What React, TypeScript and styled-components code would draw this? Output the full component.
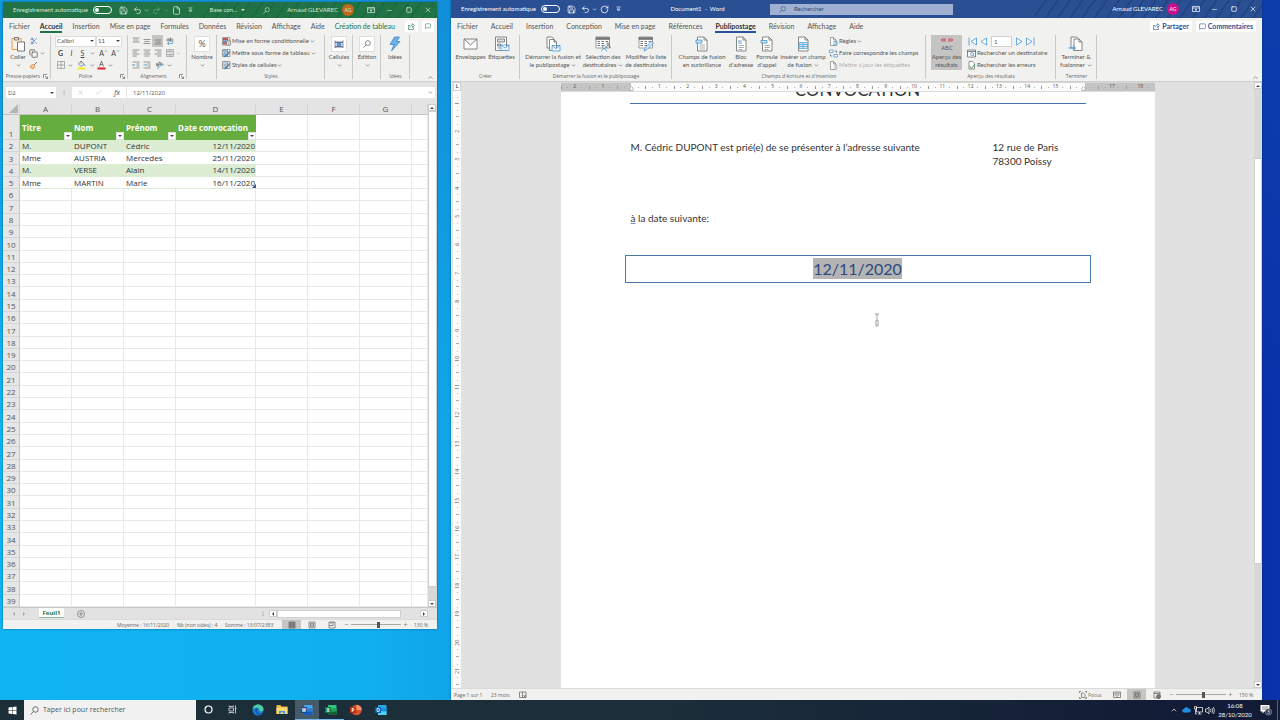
import React from "react";
import styled, { createGlobalStyle, css } from "styled-components";
import {
  Search, X, Square, Minus, Plus, ChevronDown, ChevronUp, Save, Undo2, Redo2, RotateCw, File,
  Check, Scissors, Copy, MessageSquare, MoreVertical,
} from "lucide-react";

const uiFont = `Lato, "Open Sans", sans-serif`;
const fineFont = `"Open Sans", "Noto Sans", sans-serif`;

const Global = createGlobalStyle`
  *, *::before, *::after { box-sizing: border-box; }
  body { margin: 0; font-family: ${uiFont}; font-size: 6px; line-height: 8px; color: #555; }
  button, input, select { font: inherit; color: inherit; margin: 0; padding: 0; border: 0; background: none; }
  a { color: inherit; text-decoration: none; }
  p, h1 { margin: 0; font-weight: 400; }
  svg { display: block; flex: none; }
`;

/* ---------- desktop ---------- */
const Screen = styled.div`
  min-height: 100vh;
  display: flex;
  flex-direction: column;
  background: linear-gradient(90deg, #10b4f1 0%, #10b0ee 28%, #10a4e8 36%, #0a30a6 94%, #0932ab 100%);
`;
const Desktop = styled.main`
  flex: 1;
  display: grid;
  grid-template-columns: minmax(0, 434fr) minmax(0, 811fr);
  gap: 14px;
  padding: 0 18px 0 3px;
  background: linear-gradient(180deg, rgba(20, 90, 175, 0.3), rgba(20, 90, 175, 0) 60%);
`;
const AppWindow = styled.section<{ $inset?: boolean }>`
  display: flex;
  flex-direction: column;
  min-width: 0;
  overflow: hidden;
  background: #e4e4e4;
  margin: ${(p) => (p.$inset ? "2px 0 71px" : "0")};
  box-shadow: 0 0 2px rgba(0, 40, 90, 0.6);
`;

/* ---------- title bar ---------- */
const TitleBar = styled.header<{ $tone: "green" | "blue" }>`
  height: ${(p) => (p.$tone === "green" ? "16px" : "18px")};
  flex: none;
  white-space: nowrap;
  ${(p) =>
    p.$tone === "green"
      ? css`
          display: flex;
          color: #d5e8dc;
          background: repeating-linear-gradient(125deg, transparent 0 8px, rgba(0, 50, 20, 0.14) 8px 10px) right / 54% 100% no-repeat, #217346;
        `
      : css`
          display: grid;
          grid-template-columns: 174px 145fr 183fr 309px;
          color: #fff;
          background: repeating-linear-gradient(125deg, transparent 0 8px, rgba(0, 15, 60, 0.16) 8px 10px) right / 28% 100% no-repeat, #2a4f92;
        `}
`;
const Bar = styled.div<{ $end?: boolean; $center?: boolean; $grow?: boolean }>`
  display: flex;
  align-items: center;
  min-width: 0;
  ${(p) => p.$grow && "flex: 1;"}
  justify-content: ${(p) => (p.$end ? "flex-end" : p.$center ? "center" : "flex-start")};
`;
const AutoSave = styled.label`
  display: flex;
  align-items: center;
  padding-left: 10px;
  margin-right: 4px;
  span { width: 80px; }
`;
const Toggle = styled.input`
  appearance: none;
  width: 19px;
  height: 8px;
  border: 1px solid #fff;
  border-radius: 4px;
  display: flex;
  align-items: center;
  padding-left: 1px;
  &::before { content: ""; width: 4px; height: 4px; border-radius: 50%; background: #fff; }
`;
const FileMenu = styled.button`
  display: flex;
  align-items: center;
  gap: 4px;
`;
const Slot = styled.button<{ $w: number; $dim?: boolean; $active?: boolean }>`
  width: ${(p) => p.$w}px;
  align-self: stretch;
  flex: none;
  display: flex;
  align-items: center;
  justify-content: center;
  opacity: ${(p) => (p.$dim ? 0.4 : 1)};
  background: ${(p) => (p.$active ? "#c6c5c3" : "transparent")};
`;
const Avatar = styled.span<{ $c: string }>`
  width: 12px;
  height: 12px;
  border-radius: 50%;
  margin: 0 7px 0 4px;
  background: ${(p) => p.$c};
  font-size: 5px;
  line-height: 12px;
  text-align: center;
`;
const SearchBox = styled.label`
  align-self: center;
  display: flex;
  align-items: center;
  gap: 8px;
  height: 11px;
  padding-left: 9px;
  background: #a0b0d2;
  color: #33476f;
  input { min-width: 0; flex: 1; }
  input::placeholder { color: #33476f; opacity: 1; }
`;

/* ---------- ribbon ---------- */
const Tabs = styled.nav<{ $gap: number }>`
  height: 16px;
  flex: none;
  display: flex;
  align-items: center;
  gap: ${(p) => p.$gap}px;
  padding: 0 6px;
  background: #f1f1ef;
  font-size: 7px;
  white-space: nowrap;
`;
const Tab = styled.a<{ $c?: string; $on?: boolean }>`
  padding: 2px 0 1px;
  border-bottom: 2px solid ${(p) => (p.$on ? p.$c : "transparent")};
  color: ${(p) => (p.$on ? "#333" : p.$c || "#555")};
  font-weight: ${(p) => (p.$on ? 700 : 400)};
`;
const TabActions = styled.div`
  margin-left: auto;
  display: flex;
  gap: 4px;
`;
const Action = styled.button<{ $c: string }>`
  display: flex;
  align-items: center;
  gap: 2px;
  height: 11px;
  padding: 0 3px;
  background: #fff;
  color: ${(p) => p.$c};
  font-weight: 700;
`;
const Ribbon = styled.div`
  height: 48px;
  flex: none;
  display: flex;
  background: #f1f1ef;
  border-bottom: 1px solid #cfcfcd;
  white-space: nowrap;
`;
const Group = styled.section<{ $w: number }>`
  width: ${(p) => p.$w}px;
  flex: none;
  display: flex;
  flex-direction: column;
  background: linear-gradient(#c9c9c7, #c9c9c7) right 1px / 1px 44px no-repeat;
`;
const GroupBody = styled.div<{ $pad?: number }>`
  flex: 1;
  display: flex;
  padding: 1px 0 0 ${(p) => p.$pad || 0}px;
`;
const GroupLabel = styled.footer`
  height: 10px;
  display: flex;
  align-items: center;
  font-family: ${fineFont};
  font-size: 5px;
  color: #666;
  span { flex: 1; text-align: center; }
  svg { margin-right: 3px; }
`;
const Big = styled.button<{ $w: number; $on?: boolean }>`
  width: ${(p) => p.$w}px;
  flex: none;
  align-self: flex-start;
  display: flex;
  flex-direction: column;
  align-items: center;
  padding: 1px 0;
  background: ${(p) => (p.$on ? "#c5c4c2" : "transparent")};
  color: #555;
`;
const BigIcon = styled.span<{ $box?: boolean }>`
  width: 16px;
  height: 16px;
  margin-bottom: 1px;
  display: flex;
  align-items: center;
  justify-content: center;
  font-size: 9px;
  background: ${(p) => (p.$box ? "#fff" : "transparent")};
  border: ${(p) => (p.$box ? "1px solid #dededc" : "0")};
`;
const Line = styled.span`
  height: 8px;
  display: flex;
  align-items: center;
  gap: 2px;
`;
const Rows = styled.div<{ $pad?: number }>`
  display: grid;
  grid-template-rows: repeat(3, 12px);
  padding-left: ${(p) => p.$pad || 0}px;
  align-content: start;
`;
const Row = styled.div`
  display: flex;
  align-items: center;
`;
const RowButton = styled.button<{ $off?: boolean }>`
  display: flex;
  align-items: center;
  gap: 1px;
  color: ${(p) => (p.$off ? "#b0b0b0" : "#555")};
`;
const Pick = styled.label<{ $w: number }>`
  width: ${(p) => p.$w}px;
  height: 11px;
  display: flex;
  align-items: center;
  background: #fff;
  border: 1px solid #dcdcda;
  padding: 0 1px;
  select { appearance: none; flex: 1; min-width: 0; }
`;
const Glyph = styled.span<{ $b?: boolean; $i?: boolean; $u?: boolean }>`
  font-size: 7px;
  font-weight: ${(p) => (p.$b ? 700 : 400)};
  font-style: ${(p) => (p.$i ? "italic" : "normal")};
  text-decoration: ${(p) => (p.$u ? "underline" : "none")};
  color: #444;
`;
const Record = styled.input`
  width: 21px;
  height: 11px;
  margin: 0 2px;
  padding-left: 2px;
  background: #fff;
  border: 1px solid #d0d0d0;
`;
const Collapse = styled.button`
  margin: auto 3px 0 auto;
`;

/* ---------- Excel sheet ---------- */
const FormulaBar = styled.div`
  height: 22px;
  flex: none;
  display: flex;
  align-items: center;
  padding: 0 2px 1px 3px;
  font-family: ${fineFont};
`;
const White = styled.div<{ $w?: number }>`
  height: 11px;
  background: #fff;
  display: flex;
  align-items: center;
  ${(p) => (p.$w ? `width: ${p.$w}px;` : "flex: 1; margin-left: 1px; padding: 0 2px 0 4px;")}
  input { flex: 1; min-width: 0; padding-left: 2px; }
`;
const SheetArea = styled.div`
  flex: 1;
  display: flex;
  min-height: 0;
`;
const Grid = styled.table`
  flex: 1;
  min-width: 0;
  display: grid;
  grid-template-rows: 11px 25px repeat(38, minmax(12px, 1fr));
  background: #fff;
  font-family: ${fineFont};
  font-size: 8px;
  line-height: 10px;
  color: #333;
  thead, tbody { display: contents; }
  tr {
    display: grid;
    grid-template-columns: 17px 52px 52px 52px 80px 52px 52px 52px minmax(0, 1fr);
    min-height: 0;
  }
`;
const ColHead = styled.th`
  padding: 0;
  background: #e4e4e4;
  border-right: 1px solid #d4d4d4;
  border-bottom: 1px solid #c4c4c4;
  font-weight: 400;
  color: #555;
  display: flex;
  justify-content: center;
  svg { margin-left: 4px; }
`;
const RowHead = styled.th`
  padding: 0;
  background: #e6e6e6;
  border-right: 1px solid #c8c8c8;
  border-bottom: 1px solid #d4d4d4;
  font-weight: 400;
  color: #555;
  display: flex;
  align-items: flex-end;
  justify-content: center;
`;
const Cell = styled.td<{ $band?: boolean; $plain?: boolean; $right?: boolean }>`
  padding: 0 1px 0 2px;
  display: flex;
  align-items: center;
  justify-content: ${(p) => (p.$right ? "flex-end" : "flex-start")};
  background: ${(p) => (p.$band ? "#dcedd3" : "#fff")};
  border-right: ${(p) => (p.$plain ? "1px solid #e9e9e9" : "0")};
  border-bottom: 1px solid ${(p) => (p.$plain ? "#e9e9e9" : "#dcedd3")};
  min-width: 0;
  min-height: 0;
  position: relative;
`;
const TitleCell = styled.td`
  padding: 0 0 0 2px;
  display: flex;
  justify-content: space-between;
  align-items: center;
  background: #66ad3f;
  color: #fff;
  font-weight: 700;
  position: relative;
  white-space: nowrap;
`;
const Filter = styled.button`
  position: absolute;
  right: 0;
  bottom: 0;
  width: 8px;
  height: 8px;
  background: #fff;
  border: 1px solid #e2e2e2;
  display: flex;
  align-items: center;
  justify-content: center;
`;
const Handle = styled.i`
  position: absolute;
  right: 0;
  bottom: 0;
  border: 2px solid #3a4fa0;
  border-top-color: transparent;
  border-left-color: transparent;
`;
const VScroll = styled.div<{ $w: number }>`
  width: ${(p) => p.$w}px;
  flex: none;
  display: flex;
  flex-direction: column;
  background: #d8d8d8;
`;
const Arrow = styled.button`
  width: 8px;
  height: 7px;
  flex: none;
  display: flex;
  align-items: center;
  justify-content: center;
  background: #fff;
  border: 1px solid #ccc;
`;
const Piece = styled.div<{ $f: number; $thumb?: boolean }>`
  flex: ${(p) => p.$f} 1 0;
  background: ${(p) => (p.$thumb ? "#fff" : "transparent")};
  border: ${(p) => (p.$thumb ? "1px solid #cfcfcf" : "0")};
`;
const SheetBar = styled.div`
  height: 12px;
  flex: none;
  display: flex;
  align-items: center;
  padding-right: 9px;
  background: #e2e2e2;
  border-top: 1px solid #c6c6c6;
`;
const SheetTab = styled.a`
  width: 25px;
  align-self: stretch;
  margin: 0 10px 1px 5px;
  background: #fff;
  border-bottom: 1px solid #8fb9a2;
  color: #217346;
  font-family: ${fineFont};
  font-weight: 700;
  line-height: 10px;
  text-align: center;
`;
const HTrack = styled.div`
  flex: 0 1 143px;
  height: 8px;
  display: flex;
`;
const StatusBar = styled.footer<{ $h: number }>`
  height: ${(p) => p.$h}px;
  flex: none;
  display: flex;
  align-items: center;
  background: #f1f1ef;
  border-top: 1px solid #dadad8;
  white-space: nowrap;
  font-family: ${fineFont};
  font-size: 5px;
  color: #666;
`;
const Zoom = styled.input`
  appearance: none;
  width: 50px;
  height: 8px;
  background: linear-gradient(#a8a8a8, #a8a8a8) center / 100% 1px no-repeat;
  &::-webkit-slider-thumb { appearance: none; width: 3px; height: 6px; background: #555; }
`;
const Percent = styled.span`
  width: 27px;
  padding-left: 4px;
`;
const Stat = styled.span<{ $w: number }>`
  width: ${(p) => p.$w}px;
`;

/* ---------- Word document ---------- */
const Work = styled.div`
  flex: 1;
  display: flex;
  min-height: 0;
  padding-left: 2px;
`;
const SideRuler = styled.div`
  width: 8px;
  flex: none;
  display: flex;
  flex-direction: column;
  background: #fbfbfb;
  padding-bottom: 3px;
`;
const Corner = styled.button`
  height: 9px;
  flex: none;
  border: 1px solid #cfcfcf;
  font-size: 5px;
  font-weight: 700;
  line-height: 7px;
`;
const VCm = styled.div<{ $first?: boolean }>`
  flex: ${(p) => (p.$first ? "0 0 26px" : "1 1 0")};
  padding-bottom: ${(p) => (p.$first ? "2px" : "0")};
  display: flex;
  align-items: center;
  justify-content: center;
  font-family: ${fineFont};
  font-size: 5px;
  background:
    linear-gradient(#aaa, #aaa) center bottom / 3px 1px no-repeat,
    linear-gradient(#bbb, #bbb) center 25% / 1px 1px no-repeat,
    linear-gradient(#bbb, #bbb) center 75% / 1px 1px no-repeat;
  span { writing-mode: vertical-rl; rotate: 180deg; }
`;
const Canvas = styled.div`
  flex: 1;
  min-width: 0;
  display: flex;
  flex-direction: column;
  align-items: center;
  background: #e1e1e1;
`;
const TopRuler = styled.div`
  width: 594px;
  height: 9px;
  flex: none;
  display: grid;
  grid-template-columns: repeat(21, 1fr);
  border-top: 1px solid #d8d8d8;
  background: linear-gradient(90deg, #c4c4c4 0 70px, #fbfbfb 70px 524px, #c4c4c4 524px);
`;
const HCm = styled.div`
  display: flex;
  justify-content: center;
  font-family: ${fineFont};
  font-size: 5px;
  line-height: 7px;
  background:
    linear-gradient(#999, #999) left center / 1px 3px no-repeat,
    linear-gradient(#aaa, #aaa) 25% center / 1px 1px no-repeat,
    linear-gradient(#aaa, #aaa) 75% center / 1px 1px no-repeat;
`;
const Page = styled.article`
  width: 594px;
  flex: 1;
  padding: 0 69px;
  background: #fff;
  border-top: 1px solid #dcdcdc;
  position: relative;
  font-size: 10px;
  line-height: 14px;
  color: #333;
`;
const DocTitle = styled.h1`
  height: 12px;
  overflow: hidden;
  border-bottom: 1px solid #4472b0;
  display: flex;
  align-items: flex-end;
  justify-content: center;
  font-size: 17px;
  line-height: 20px;
  padding-bottom: 3px;
`;
const Columns = styled.div`
  display: grid;
  grid-template-columns: 362fr 93fr;
  padding: 36px 0 0 1px;
`;
const When = styled.p`
  padding: 43px 0 30px 1px;
  span { text-decoration: underline #8a8ac8; }
`;
const DateBox = styled.div`
  margin: 0 -5px;
  height: 28px;
  border: 1px solid #4a78ac;
  display: flex;
  align-items: center;
  justify-content: center;
  font-size: 16px;
  line-height: 21px;
  color: #2f4880;
  padding-bottom: 1px;
  mark { background: #b4b4b4; color: inherit; }
`;
const Pointer = styled.svg`
  position: absolute;
  left: 313px;
  top: 221px;
`;

/* ---------- taskbar ---------- */
const Taskbar = styled.footer`
  height: 20px;
  flex: none;
  display: flex;
  align-items: center;
  color: #fff;
  background: linear-gradient(90deg, #1c2e38, #1c2f3a 50%, #121c36 92%);
`;
const TaskSearch = styled.label`
  width: 172px;
  align-self: stretch;
  display: flex;
  align-items: center;
  gap: 4px;
  padding-left: 6px;
  background: #f1f1f1;
  color: #444;
  font-family: ${fineFont};
  input { flex: 1; min-width: 0; font-size: 7px; }
  input::placeholder { color: #555; opacity: 1; }
`;
const Tasks = styled.div`
  width: 197px;
  align-self: stretch;
  display: flex;
`;
const Task = styled.button<{ $open?: boolean; $active?: boolean }>`
  flex: 1;
  display: flex;
  align-items: center;
  justify-content: center;
  background: ${(p) => (p.$active ? "#465a68" : "transparent")};
  border-bottom: 1px solid ${(p) => (p.$open ? "#76b9ed" : "transparent")};
`;
const Start = styled.button`
  width: 24px;
  align-self: stretch;
  display: flex;
  align-items: center;
  justify-content: center;
`;
const Tray = styled.div`
  margin-left: auto;
  align-self: stretch;
  display: flex;
  align-items: center;
`;
const Clock = styled.time`
  width: 38px;
  text-align: center;
  line-height: 9px;
`;
const ShowDesktop = styled.button`
  width: 3px;
  height: 20px;
  border-left: 1px solid #56607a;
`;

/* ---------- drawings ---------- */
const Tri = ({ d = "down", c = "#444" }: { d?: "up" | "down" | "left" | "right"; c?: string }) => (
  <svg width="4" height="4" viewBox="0 0 4 4" fill={c}>
    <path d={{ up: "M0 3h4L2 1z", down: "M0 1h4L2 3z", left: "M3 0v4L1 2z", right: "M1 0v4l2-2z" }[d]} />
  </svg>
);
const IndentMark = () => (
  <svg width="5" height="8" viewBox="0 0 5 8" fill="#fff" stroke="#aaa" strokeWidth="0.800">
    <path d="M1 7.500V5l1.500-1.500L4 5v2.500z" />
  </svg>
);
const Chev = () => <ChevronDown size={5} strokeWidth={3} />;
const Lens = ({ size }: { size: number }) => (
  <svg width={size} height={size} viewBox="0 0 18 18" fill="none" stroke="currentColor" strokeWidth="1.5">
    <circle cx="11" cy="7" r="5.500" /><path d="M7 11l-6 6" />
  </svg>
);
const ShareIcon = () => (
  <svg width="7" height="7" viewBox="0 0 14 14" fill="none" stroke="currentColor" strokeWidth="1.200">
    <path d="M4 5H1v8h10V9M4 9c0-4 3-5 5-5V1l4 4-4 4V6" />
  </svg>
);
const MoreBar = () => (
  <svg width="5" height="6" viewBox="0 0 10 12" fill="none" stroke="currentColor" strokeWidth="1.400"><path d="M1 2h8M2 6h6l-3 4z" /></svg>
);
const Launcher = () => (
  <svg width="5" height="5" viewBox="0 0 10 10" fill="none" stroke="#666" strokeWidth="1.4">
    <path d="M1 8V1h7M4 4l5 5M9 5v4H5" />
  </svg>
);
const RibbonIcon = () => (
  <svg width="8" height="6" viewBox="0 0 16 12" fill="none" stroke="currentColor" strokeWidth="1.4">
    <path d="M1 1h14v10H1zM1 4h14M8 10V6M6 8l2-2 2 2" />
  </svg>
);
const Paper = ({ children }: { children?: React.ReactNode }) => (
  <svg width="14" height="16" viewBox="0 0 28 32" fill="none" strokeWidth="1.6">
    <path d="M5 2h13l6 6v22H5z" fill="#fff" stroke="#6a6a6a" />
    <path d="M18 2v6h6" stroke="#6a6a6a" />
    {children}
  </svg>
);
const EnvelopeIcon = () => (
  <svg width="15" height="12" viewBox="0 0 30 24" fill="#fff" stroke="#6a6a6a" strokeWidth="1.6">
    <path d="M2 2h26v20H2zM2 2l13 12L28 2" />
  </svg>
);
const LabelsIcon = () => (
  <svg width="16" height="16" viewBox="0 0 32 32" fill="none" stroke="#6a6a6a" strokeWidth="1.6">
    <path d="M3 2h22v27H3z" fill="#fff" />
    <path d="M7 6h14v6H7zM7 16h6v4H7zM7 24h6" fill="#ddd" />
    <path d="M14 18h16v11H14zM14 18l8 6 8-6" fill="#eaf5fd" stroke="#4a9bd4" />
  </svg>
);
const MergeIcon = () => (
  <svg width="16" height="16" viewBox="0 0 32 32" fill="#fff" stroke="#6a6a6a" strokeWidth="1.6">
    <path d="M4 2h10l4 4v18H4z" />
    <path d="M9 7h9l5 5v17H9zM18 7v5h5" />
    <path d="M14 19h16v11H14zM14 19l8 6 8-6" fill="#eaf5fd" stroke="#4a9bd4" />
  </svg>
);
const ListIcon = ({ edit }: { edit?: boolean }) => (
  <svg width="16" height="16" viewBox="0 0 32 32" fill="none" stroke="#777" strokeWidth="1.4">
    <path d="M2 2h27v22H2z" fill="#fff" />
    <path d="M2 3h27v4H2z" fill="#777" />
    <path d="M5 11h5M13 11h5M21 11h5M5 15h5M13 15h5M5 19h5M13 19h5" strokeWidth="2" />
    {edit ? (
      <path d="M27 10l4 4-13 13-6 3 2-6z" fill="#cfe6f7" stroke="#3e8fd0" />
    ) : (
      <>
        <circle cx="18" cy="22" r="3" fill="#eaf5fd" stroke="#3e8fd0" />
        <path d="M13 31c0-7 10-7 10 0" fill="#eaf5fd" stroke="#3e8fd0" />
        <circle cx="26" cy="16" r="2.5" fill="#fff" stroke="#555" />
        <path d="M23 24c0-6 7-6 8 0" stroke="#555" />
      </>
    )}
  </svg>
);
const FinishIcon = () => (
  <svg width="16" height="16" viewBox="0 0 32 32" fill="#fff" stroke="#6a6a6a" strokeWidth="1.6">
    <path d="M6 2h11l4 4v18H6z" />
    <path d="M12 6h10l6 6v17H12zM22 6v6h6" />
    <path d="M1 24h13M10 19l5 5-5 5" fill="none" stroke="#3e9be0" strokeWidth="2" />
  </svg>
);
const SmallDoc = ({ c }: { c: string }) => (
  <svg width="9" height="9" viewBox="0 0 18 18" fill="#fff" stroke="#777" strokeWidth="1.3">
    <path d="M3 1h6l5 5v11H3zM9 1v5h5" />
    <path d="M10 9h6v7h-6z" stroke={c} fill="none" />
  </svg>
);
const MatchIcon = () => (
  <svg width="9" height="9" viewBox="0 0 18 18" fill="#fff" stroke="#3e8fd0" strokeWidth="1.4">
    <path d="M1 2h7v5H1zM10 11h7v5h-7z" />
    <path d="M11 4h4v4M3 10v4h4" stroke="#666" fill="none" />
  </svg>
);
const FindIcon = () => (
  <svg width="9" height="9" viewBox="0 0 18 18" fill="#fff" stroke="#555" strokeWidth="1.4">
    <path d="M1 2h16v14H1zM1 5h16" />
    <circle cx="10" cy="10" r="3" stroke="#3e8fd0" />
    <path d="M12 12l3 3" stroke="#3e8fd0" />
  </svg>
);
const ErrorIcon = () => (
  <svg width="9" height="9" viewBox="0 0 18 18" fill="#fff" stroke="#666" strokeWidth="1.4">
    <path d="M4 1h7l4 4v11H4z" />
    <path d="M5 10l4 5 7-9" fill="none" stroke="#3c9a54" strokeWidth="1.8" />
  </svg>
);
const NavIcon = ({ left, bar }: { left?: boolean; bar?: boolean }) => (
  <svg width="9" height="9" viewBox="0 0 18 18" fill="#fff" stroke="#3e8fd0" strokeWidth="1.5">
    <g transform={left ? "matrix(-1 0 0 1 18 0)" : undefined}>
      <path d={bar ? "M1 2l11 7-11 7zM16 1v16" : "M3 2l11 7-11 7z"} />
    </g>
  </svg>
);
const PasteIcon = () => (
  <svg width="15" height="16" viewBox="0 0 30 32" fill="none" strokeWidth="1.8">
    <path d="M2 5h18v22H2z" stroke="#e0913a" fill="#fbf3e8" />
    <path d="M7 3h8v5H7z" stroke="#666" fill="#eee" />
    <path d="M13 12h14v18H13z" stroke="#666" fill="#fff" />
  </svg>
);
const BrushIcon = () => (
  <svg width="9" height="9" viewBox="0 0 18 18" fill="none" strokeWidth="1.6">
    <path d="M16 2l-6 6" stroke="#555" />
    <path d="M7 6l5 5-4 5-6-4z" stroke="#dd8433" fill="#f4c797" />
  </svg>
);
const LinesIcon = ({ rows, c = "#666" }: { rows: number[][]; c?: string }) => (
  <svg width="8" height="8" viewBox="0 0 16 16" stroke={c} strokeWidth="1.3">
    {rows.map(([y, a, b]) => <path key={y} d={`M${a} ${y}H${b}`} />)}
  </svg>
);
const IndentIcon = ({ flip }: { flip?: boolean }) => (
  <svg width="8" height="8" viewBox="0 0 16 16" fill="none" stroke="#666" strokeWidth="1.3">
    <path d="M1 2h14M9 6h6M9 10h6M1 14h14" />
    <path d={flip ? "M1 8h6M5 6l2 2-2 2" : "M1 8h6M3 6L1 8l2 2"} stroke="#3e8fd0" />
  </svg>
);
const WrapIcon = () => (
  <svg width="8" height="9" viewBox="0 0 16 18" fill="none" stroke="#666" strokeWidth="1.4">
    <circle cx="4" cy="6" r="2.4" /><path d="M6.500 3v6M9 1v8" /><circle cx="11.500" cy="6" r="2.400" />
    <path d="M3 13h9c3 0 3-4 0-4M6 10l-3 3 3 3" stroke="#3e8fd0" />
  </svg>
);
const MergeCells = () => (
  <svg width="8" height="8" viewBox="0 0 16 16" fill="#ddd" stroke="#999" strokeWidth="1.3">
    <path d="M1 1h14v14H1zM1 5h14M1 11h14M8 1v4M8 11v4" />
  </svg>
);
const OrientIcon = () => (
  <svg width="9" height="9" viewBox="0 0 18 18" fill="none" stroke="#666" strokeWidth="1.4">
    <circle cx="5" cy="8" r="2.500" /><circle cx="10" cy="5" r="2.500" /><path d="M7 11L3 4M12 8L8 1" />
    <path d="M4 16L16 6M16 10V6h-4" stroke="#3e8fd0" />
  </svg>
);
const BorderIcon = () => (
  <svg width="8" height="8" viewBox="0 0 16 16" fill="none" stroke="#888" strokeWidth="1.3">
    <path d="M1 1h14v14H1zM8 1v14M1 8h14" />
  </svg>
);
const FillIcon = () => (
  <svg width="9" height="10" viewBox="0 0 18 20" fill="none" stroke="#666" strokeWidth="1.400">
    <path d="M8 2l6 6-6 5-5-5zM8 2v5" /><path d="M15 9l1 3" stroke="#3e8fd0" strokeWidth="2" />
    <path d="M1 17h16" stroke="#f5ea14" strokeWidth="4" />
  </svg>
);
const InkIcon = () => (
  <svg width="9" height="10" viewBox="0 0 18 20" fill="none" stroke="#555" strokeWidth="1.500">
    <path d="M5 13L9 2l4 11M6 9h6" /><path d="M1 17h16" stroke="#d8202e" strokeWidth="4" />
  </svg>
);
const SizeMark = ({ down }: { down?: boolean }) => (
  <svg width="4" height="6" viewBox="0 0 8 12" fill="none" stroke="#3e6fa0" strokeWidth="1.300">
    <path d={down ? "M2 1l2 2 2-2" : "M2 3l2-2 2 2"} />
  </svg>
);
const StyleIcon = ({ a, b }: { a: string; b: string }) => (
  <svg width="9" height="9" viewBox="0 0 18 18" fill="#fff" stroke="#666" strokeWidth="1.200">
    <path d="M1 1h15v14H1zM1 6h15M1 10h15M6 1v14M11 1v14" />
    <path d="M2 2h8v4H2zM2 10h6v4H2z" fill={a} stroke="none" />
    <path d="M16 5l-8 10-3 1 1-3z" fill={b} stroke={b} />
  </svg>
);
const RulesIcon = () => (
  <svg width="9" height="9" viewBox="0 0 18 18" fill="#fff" stroke="#666" strokeWidth="1.200">
    <path d="M1 1h15v15H1z" /><path d="M2 2h10v4H2zM2 11h8v4H2z" fill="#d9505c" stroke="none" />
    <path d="M2 7h7v3H2z" fill="#4a8fd0" stroke="none" /><path d="M1 6h15M1 11h15M11 1v15" />
    <path d="M9 8h8v8H9zM11 10.500h4M11 13.500h4" />
  </svg>
);
const CellsIcon = () => (
  <svg width="10" height="10" viewBox="0 0 20 20" fill="none" stroke="#557" strokeWidth="1.500">
    <path d="M2 3v3h16V3M2 7h16v8H2zM2 18v-2h16v2" /><path d="M6 9h8v4H6z" fill="#5aa3dc" stroke="#2d7dc4" />
  </svg>
);
const BoltIcon = () => (
  <svg width="14" height="16" viewBox="0 0 28 32" fill="#6db3ea" stroke="#2d7dc4" strokeWidth="1.400">
    <path d="M13 2h10l-6 9h7L7 30l5-13H4z" />
  </svg>
);
const ViewIcon = ({ k }: { k: "grid" | "page" | "break" | "read" | "web" | "proof" | "focus" }) => (
  <svg width="8" height="8" viewBox="0 0 16 16" fill="none" stroke="#555" strokeWidth="1.300">
    {k === "grid" && <path d="M2 2h12v12H2zM2 6h12M2 10h12M5 2v12M8 2v12M11 2v12" />}
    {k === "page" && <path d="M2 2h12v12H2zM5 5h6v6H5zM5 8h6" />}
    {k === "break" && <path d="M2 2h12v12H2zM2 9h8V2M6 2v4" />}
    {k === "read" && <path d="M8 3v11M1 2h14v11H1zM3 5h3M3 8h3M10 5h3M10 8h3" />}
    {k === "web" && <><path d="M2 2h12v12H2zM2 5h12" /><circle cx="11" cy="11" r="4" fill="#777" /></>}
    {k === "proof" && <path d="M1 2h13v11H1zM7 2v11M9 8l5 6M14 8l-5 6" />}
    {k === "focus" && <path d="M1 4V1h3M12 1h3v3M15 12v3h-3M4 15H1v-3M5 4h4l3 3v6H5z" />}
  </svg>
);
const OfficeIcon = ({ c, dark, letter, round }: { c: string[]; dark: string; letter: string; round?: boolean }) => (
  <svg width="12" height="12" viewBox="0 0 24 24">
    {round ? (
      <><circle cx="13" cy="12" r="10.500" fill={c[0]} /><path d="M13 1.500a10.500 10.500 0 0 1 10.500 10.500H13z" fill={c[1]} /></>
    ) : (
      <>
        <rect x="6" y="2" width="17" height="20" rx="1.500" fill={c[0]} />
        <path d="M6 8.500h17V15H6z" fill={c[1]} /><path d="M6 15h17v7H6z" fill={c[2]} />
      </>
    )}
    <rect x="0" y="6" width="12" height="12" rx="1.200" fill={dark} />
    <text x="6" y="15.500" fontSize="9" fontWeight="700" textAnchor="middle" fill="#fff" fontFamily="Open Sans, sans-serif">{letter}</text>
  </svg>
);
const EdgeIcon = () => (
  <svg width="12" height="12" viewBox="0 0 24 24">
    <circle cx="12" cy="12" r="11" fill="#1b7fd0" />
    <path d="M1 11C2 4 7 1 12 1c7 0 11 5 11 9 0 3-2 5-5 5-4 0-4-2-3-3 0-3-3-5-6-5-4 0-7 2-8 4z" fill="#4fd0a0" />
    <path d="M9 8c-4 3-3 10 4 13 4 1 7-1 8-3-8 3-13-3-9-8z" fill="#1357a6" />
  </svg>
);

/* ---------- data ---------- */
const people = [
  ["M.", "DUPONT", "Cédric", "12/11/2020"],
  ["Mme", "AUSTRIA", "Mercedes", "25/11/2020"],
  ["M.", "VERSE", "Alain", "14/11/2020"],
  ["Mme", "MARTIN", "Marie", "16/11/2020"],
];
const left = [[2, 1, 15], [6, 1, 10], [10, 1, 15], [14, 1, 10]];
const mid = [[2, 1, 15], [6, 3, 13], [10, 1, 15], [14, 3, 13]];
const right = [[2, 1, 15], [6, 6, 15], [10, 1, 15], [14, 6, 15]];

/* centimetre marks, counted from the left margin; indent marks stand at both margins */
const rulerMarks = Array.from({ length: 21 }, (_, i) => i - 2);

const WindowControls = () => (
  <>
    <Slot $w={19} aria-label="Options du ruban"><RibbonIcon /></Slot>
    <Slot $w={19} aria-label="Réduire"><Minus size={7} /></Slot>
    <Slot $w={19} aria-label="Agrandir"><Square size={6} strokeWidth={3} /></Slot>
    <Slot $w={19} aria-label="Fermer"><X size={8} /></Slot>
  </>
);

const Excel = () => (
  <AppWindow $inset>
    <TitleBar $tone="green">
      <Bar>
        <AutoSave><span>Enregistrement automatique</span><Toggle type="checkbox" role="switch" /></AutoSave>
        <Slot $w={14} aria-label="Enregistrer"><Save size={9} /></Slot>
        <Slot $w={14} aria-label="Annuler"><Undo2 size={9} /></Slot>
        <Slot $w={5} aria-label="Historique"><Chev /></Slot>
        <Slot $w={15} $dim aria-label="Rétablir"><Redo2 size={9} /></Slot>
        <Slot $w={5} $dim aria-label="Historique"><Chev /></Slot>
        <Slot $w={15} aria-label="Nouveau"><File size={9} /></Slot>
        <Slot $w={12} aria-label="Personnaliser"><MoreBar /></Slot>
      </Bar>
      <Bar $grow $end>
        <FileMenu>Base con... <Tri c="#d5e8dc" /></FileMenu>
        <Slot $w={42} aria-label="Rechercher"><Lens size={7} /></Slot>
        <span>Arnaud GLEVAREC</span>
        <Avatar $c="#bd6a1c">AG</Avatar>
        <WindowControls />
      </Bar>
    </TitleBar>
    <Tabs $gap={10}>
      <Tab href="#">Fichier</Tab>
      <Tab href="#" $on $c="#217346">Accueil</Tab>
      {["Insertion", "Mise en page", "Formules", "Données", "Révision", "Affichage", "Aide"].map((t) => <Tab href="#" key={t}>{t}</Tab>)}
      <Tab href="#" $c="#217346">Création de tableau</Tab>
      <TabActions>
        <Action $c="#217346" aria-label="Partager"><ShareIcon /></Action>
        <Action $c="#217346" aria-label="Commentaires"><MessageSquare size={6} /></Action>
      </TabActions>
    </Tabs>
    <Ribbon>
      <Group $w={48}>
        <GroupBody $pad={6}>
          <Big $w={18}><BigIcon><PasteIcon /></BigIcon><Line>Coller</Line><Line><Chev /></Line></Big>
          <Rows>
            <Row><Slot $w={13} aria-label="Couper"><Scissors size={8} color="#4a7fb0" /></Slot></Row>
            <Row><Slot $w={13} aria-label="Copier"><Copy size={9} /></Slot><Chev /></Row>
            <Row><Slot $w={13} aria-label="Reproduire la mise en forme"><BrushIcon /></Slot></Row>
          </Rows>
        </GroupBody>
        <GroupLabel><span>Presse-papiers</span><Launcher /></GroupLabel>
      </Group>
      <Group $w={77}>
        <GroupBody $pad={4}>
          <Rows>
            <Row>
              <Pick $w={41}><select aria-label="Police"><option>Calibri</option></select><Tri /></Pick>
              <Pick $w={26}><select aria-label="Taille"><option>11</option></select><Tri /></Pick>
            </Row>
            <Row>
              <Slot $w={11}><Glyph $b>G</Glyph></Slot><Slot $w={11}><Glyph $i>I</Glyph></Slot>
              <Slot $w={11}><Glyph $u>S</Glyph></Slot><Slot $w={8} aria-label="Soulignement"><Chev /></Slot>
              <Slot $w={15}><Glyph>A</Glyph><SizeMark /></Slot><Slot $w={9}><Glyph>A</Glyph><SizeMark down /></Slot>
            </Row>
            <Row>
              <Slot $w={11} aria-label="Bordures"><BorderIcon /></Slot><Slot $w={8} aria-label="Choix de bordure"><Chev /></Slot>
              <Slot $w={15} aria-label="Remplissage"><FillIcon /></Slot><Slot $w={6} aria-label="Choix de remplissage"><Chev /></Slot>
              <Slot $w={12} aria-label="Couleur"><InkIcon /></Slot><Slot $w={6} aria-label="Choix de couleur"><Chev /></Slot>
            </Row>
          </Rows>
        </GroupBody>
        <GroupLabel><span>Police</span><Launcher /></GroupLabel>
      </Group>
      <Group $w={59}>
        <GroupBody $pad={2}>
          <Rows>
            <Row>
              <Slot $w={11} aria-label="Haut"><LinesIcon rows={[[2, 1, 15], [6, 3, 13], [10, 1, 15]]} /></Slot>
              <Slot $w={11} aria-label="Centré"><LinesIcon rows={[[5, 1, 15], [9, 3, 13], [13, 1, 15]]} /></Slot>
              <Slot $w={11} $active aria-label="Bas"><LinesIcon rows={[[6, 1, 15], [10, 3, 13], [14, 1, 15]]} /></Slot>
              <Slot $w={13} aria-label="Renvoyer à la ligne"><WrapIcon /></Slot>
            </Row>
            <Row>
              <Slot $w={11} aria-label="Gauche"><LinesIcon rows={left} /></Slot>
              <Slot $w={11} aria-label="Milieu"><LinesIcon rows={mid} /></Slot>
              <Slot $w={11} aria-label="Droite"><LinesIcon rows={right} /></Slot>
              <Slot $w={13} aria-label="Fusionner"><MergeCells /></Slot>
              <Slot $w={5} $dim aria-label="Options de fusion"><Chev /></Slot>
            </Row>
            <Row>
              <Slot $w={11} aria-label="Diminuer le retrait"><IndentIcon /></Slot>
              <Slot $w={11} aria-label="Augmenter le retrait"><IndentIcon flip /></Slot>
              <Slot $w={15} aria-label="Orientation"><OrientIcon /></Slot><Chev />
            </Row>
          </Rows>
        </GroupBody>
        <GroupLabel><span>Alignement</span><Launcher /></GroupLabel>
      </Group>
      <Group $w={30}>
        <GroupBody><Big $w={30}><BigIcon $box>%</BigIcon><Line>Nombre</Line><Line><Chev /></Line></Big></GroupBody>
      </Group>
      <Group $w={108}>
        <GroupBody $pad={5}>
          <Rows>
            <RowButton><RulesIcon />Mise en forme conditionnelle <Chev /></RowButton>
            <RowButton><StyleIcon a="#8db9e0" b="#3e7fc0" />Mettre sous forme de tableau <Chev /></RowButton>
            <RowButton><StyleIcon a="#b7d3ea" b="#3e7fc0" />Styles de cellules <Chev /></RowButton>
          </Rows>
        </GroupBody>
        <GroupLabel><span>Styles</span></GroupLabel>
      </Group>
      <Group $w={28}>
        <GroupBody><Big $w={28}><BigIcon $box><CellsIcon /></BigIcon><Line>Cellules</Line><Line><Chev /></Line></Big></GroupBody>
      </Group>
      <Group $w={28}>
        <GroupBody><Big $w={28}><BigIcon $box><Lens size={8} /></BigIcon><Line>Édition</Line><Line><Chev /></Line></Big></GroupBody>
      </Group>
      <Group $w={29}>
        <GroupBody><Big $w={28}><BigIcon><BoltIcon /></BigIcon><Line>Idées</Line></Big></GroupBody>
        <GroupLabel><span>Idées</span></GroupLabel>
      </Group>
      <Collapse aria-label="Réduire le ruban"><ChevronUp size={7} /></Collapse>
    </Ribbon>
    <FormulaBar>
      <White $w={50}><input aria-label="Zone Nom" defaultValue="D2" /><Slot $w={9} aria-label="Noms"><Tri /></Slot></White>
      <Slot as="span" $w={16} $dim><MoreVertical size={6} /></Slot>
      <White $w={54}>
        <Slot $w={17} $dim aria-label="Annuler la saisie"><X size={7} /></Slot>
        <Slot $w={19} $dim aria-label="Valider"><Check size={7} /></Slot>
        <Slot $w={18} aria-label="Insérer une fonction"><Glyph $i>fx</Glyph></Slot>
      </White>
      <White><input aria-label="Barre de formule" defaultValue="12/11/2020" /><Chev /></White>
    </FormulaBar>
    <SheetArea>
      <Grid>
        <thead>
          <tr>
            <ColHead scope="col"><svg width="9" height="9" viewBox="0 0 9 9" fill="#b4b4b4"><path d="M9 0v9H0z" /></svg></ColHead>
            {["A", "B", "C", "D", "E", "F", "G", ""].map((c) => <ColHead key={c} scope="col">{c}</ColHead>)}
          </tr>
        </thead>
        <tbody>
          <tr>
            <RowHead scope="row">1</RowHead>
            {["Titre", "Nom", "Prénom", "Date convocation"].map((t) => (
              <TitleCell key={t}>{t}<Filter aria-label={`Filtrer ${t}`}><Tri /></Filter></TitleCell>
            ))}
            {[0, 1, 2, 3].map((i) => <Cell key={i} $plain />)}
          </tr>
          {Array.from({ length: 38 }, (_, r) => (
            <tr key={r}>
              <RowHead scope="row">{r + 2}</RowHead>
              {Array.from({ length: 8 }, (_, c) => {
                const inTable = r < 4 && c < 4;
                return (
                  <Cell key={c} $plain={!inTable} $band={inTable && r % 2 === 0} $right={c === 3}>
                    {inTable ? people[r][c] : null}
                    {r === 3 && c === 3 && <Handle />}
                  </Cell>
                );
              })}
            </tr>
          ))}
        </tbody>
      </Grid>
      <VScroll $w={9}>
        <Arrow aria-label="Monter"><Tri d="up" /></Arrow>
        <Piece $f={476} $thumb /><Piece $f={13} />
        <Arrow aria-label="Descendre"><Tri /></Arrow>
      </VScroll>
    </SheetArea>
    <SheetBar>
      <Slot $w={5} as="span" /><Slot $w={11} $dim aria-label="Feuille précédente"><Tri d="left" /></Slot>
      <Slot $w={10} $dim aria-label="Feuille suivante"><Tri d="right" /></Slot><Slot $w={5} as="span" />
      <SheetTab href="#">Feuil1</SheetTab>
      <Slot $w={14} aria-label="Nouvelle feuille">
        <svg width="8" height="8" viewBox="0 0 16 16" fill="none" stroke="#666" strokeWidth="1.300"><circle cx="8" cy="8" r="7" /><path d="M8 4v8M4 8h8" /></svg>
      </Slot>
      <Bar $grow $end><Slot as="span" $w={12} $dim><MoreVertical size={6} /></Slot></Bar>
      <Arrow aria-label="Gauche"><Tri d="left" /></Arrow>
      <HTrack><Piece $f={124} $thumb /><Piece $f={19} /></HTrack>
      <Arrow aria-label="Droite"><Tri d="right" /></Arrow>
    </SheetBar>
    <StatusBar $h={10}>
      <Bar $grow $end>
        <Stat $w={60}>Moyenne : 16/11/2020</Stat><Stat $w={48}>Nb (non vides) : 4</Stat><Stat $w={57}>Somme : 13/07/2383</Stat>
      </Bar>
      <Slot $w={19} $active aria-label="Normal"><ViewIcon k="grid" /></Slot>
      <Slot $w={21} aria-label="Mise en page"><ViewIcon k="page" /></Slot>
      <Slot $w={20} aria-label="Sauts de page"><ViewIcon k="break" /></Slot>
      <Slot $w={9} aria-label="Zoom arrière"><Minus size={5} /></Slot>
      <Zoom type="range" aria-label="Zoom" min={0} max={100} defaultValue={55} />
      <Slot $w={9} aria-label="Zoom avant"><Plus size={5} /></Slot>
      <Percent>130 %</Percent>
    </StatusBar>
  </AppWindow>
);

const Word = () => (
  <AppWindow>
    <TitleBar $tone="blue">
      <Bar>
        <AutoSave><span>Enregistrement automatique</span><Toggle type="checkbox" role="switch" /></AutoSave>
        <Slot $w={14} aria-label="Enregistrer"><Save size={9} /></Slot>
        <Slot $w={14} aria-label="Annuler"><Undo2 size={9} /></Slot>
        <Slot $w={5} aria-label="Historique"><Chev /></Slot>
        <Slot $w={15} aria-label="Répéter"><RotateCw size={9} /></Slot>
        <Slot $w={12} aria-label="Personnaliser"><MoreBar /></Slot>
      </Bar>
      <Bar $center>Document1&nbsp; -&nbsp; Word</Bar>
      <SearchBox><Lens size={7} /><input aria-label="Rechercher" placeholder="Rechercher" /></SearchBox>
      <Bar $end>
        <span>Arnaud GLEVAREC</span>
        <Avatar $c="#c9108a">AG</Avatar>
        <WindowControls />
      </Bar>
    </TitleBar>
    <Tabs $gap={13}>
      {["Fichier", "Accueil", "Insertion", "Conception", "Mise en page", "Références"].map((t) => <Tab href="#" key={t}>{t}</Tab>)}
      <Tab href="#" $on $c="#2a5298">Publipostage</Tab>
      {["Révision", "Affichage", "Aide"].map((t) => <Tab href="#" key={t}>{t}</Tab>)}
      <TabActions>
        <Action $c="#2a5298"><ShareIcon />Partager</Action>
        <Action $c="#2a5298"><MessageSquare size={7} />Commentaires</Action>
      </TabActions>
    </Tabs>
    <Ribbon>
      <Group $w={69}>
        <GroupBody $pad={4}>
          <Big $w={31}><BigIcon><EnvelopeIcon /></BigIcon><Line>Enveloppes</Line></Big>
          <Big $w={31}><BigIcon><LabelsIcon /></BigIcon><Line>Étiquettes</Line></Big>
        </GroupBody>
        <GroupLabel><span>Créer</span></GroupLabel>
      </Group>
      <Group $w={152}>
        <GroupBody $pad={4}>
          <Big $w={58}><BigIcon><MergeIcon /></BigIcon><Line>Démarrer la fusion et</Line><Line>le publipostage <Chev /></Line></Big>
          <Big $w={42}><BigIcon><ListIcon /></BigIcon><Line>Sélection des</Line><Line>destinataires <Chev /></Line></Big>
          <Big $w={44}><BigIcon><ListIcon edit /></BigIcon><Line>Modifier la liste</Line><Line>de destinataires</Line></Big>
        </GroupBody>
        <GroupLabel><span>Démarrer la fusion et le publipostage</span></GroupLabel>
      </Group>
      <Group $w={254}>
        <GroupBody $pad={4}>
          <Big $w={52}>
            <BigIcon><Paper><path d="M2 8h12v6H2z" fill="#cfe6f7" stroke="#3e8fd0" /><path d="M9 18h11M9 22h11M9 26h11" stroke="#999" /></Paper></BigIcon>
            <Line>Champs de fusion</Line><Line>en surbrillance</Line>
          </Big>
          <Big $w={26}>
            <BigIcon><Paper><path d="M8 10h8M8 14h8" stroke="#3e8fd0" /><path d="M9 19h11M9 23h11M9 27h8" stroke="#999" /></Paper></BigIcon>
            <Line>Bloc</Line><Line>d'adresse</Line>
          </Big>
          <Big $w={26}>
            <BigIcon><Paper><path d="M2 9h12v5H2z" fill="#cfe6f7" stroke="#3e8fd0" /><path d="M9 19h11M9 23h11M9 27h8" stroke="#999" /></Paper></BigIcon>
            <Line>Formule</Line><Line>d'appel</Line>
          </Big>
          <Big $w={46}>
            <BigIcon><Paper><path d="M6 13h17v12H6z" fill="#cfe6f7" stroke="#5aa7de" /><path d="M6 17h17M6 21h17M14 13v12" stroke="#5aa7de" /></Paper></BigIcon>
            <Line>Insérer un champ</Line><Line>de fusion <Chev /></Line>
          </Big>
          <Rows $pad={3}>
            <RowButton><SmallDoc c="#3e8fd0" />Règles <Chev /></RowButton>
            <RowButton><MatchIcon />Faire correspondre les champs</RowButton>
            <RowButton $off disabled><SmallDoc c="#bbb" />Mettre à jour les étiquettes</RowButton>
          </Rows>
        </GroupBody>
        <GroupLabel><span>Champs d'écriture et d'insertion</span></GroupLabel>
      </Group>
      <Group $w={130}>
        <GroupBody $pad={5}>
          <Big $w={31} $on>
            <BigIcon>
              <svg width="16" height="14" viewBox="0 0 32 28" fill="none" stroke="#d23a4e" strokeWidth="1.800">
                <path d="M9 3L4 6l5 3M14 3L9 6l5 3M18 3l5 3-5 3M23 3l5 3-5 3" />
                <text x="16" y="25" fontSize="12" textAnchor="middle" fill="#555" stroke="none" fontFamily="Open Sans, sans-serif">ABC</text>
              </svg>
            </BigIcon>
            <Line>Aperçu des</Line><Line>résultats</Line>
          </Big>
          <Rows $pad={5}>
            <Row>
              <Slot $w={11} aria-label="Premier"><NavIcon left bar /></Slot><Slot $w={11} aria-label="Précédent"><NavIcon left /></Slot>
              <Record aria-label="Enregistrement" defaultValue="1" />
              <Slot $w={11} aria-label="Suivant"><NavIcon /></Slot><Slot $w={11} aria-label="Dernier"><NavIcon bar /></Slot>
            </Row>
            <RowButton><FindIcon />Rechercher un destinataire</RowButton>
            <RowButton><ErrorIcon />Rechercher les erreurs</RowButton>
          </Rows>
        </GroupBody>
        <GroupLabel><span>Aperçu des résultats</span></GroupLabel>
      </Group>
      <Group $w={41}>
        <GroupBody>
          <Big $w={40}><BigIcon><FinishIcon /></BigIcon><Line>Terminer &amp;</Line><Line>fusionner <Chev /></Line></Big>
        </GroupBody>
        <GroupLabel><span>Terminer</span></GroupLabel>
      </Group>
      <Collapse aria-label="Réduire le ruban"><ChevronUp size={7} /></Collapse>
    </Ribbon>
    <Work>
      <SideRuler>
        <Corner aria-label="Tabulation">L</Corner>
        {Array.from({ length: 21 }, (_, i) => <VCm key={i} $first={i === 0}><span>{i + 1}</span></VCm>)}
      </SideRuler>
      <Canvas>
        <TopRuler>
          {rulerMarks.map((n) => <HCm key={n}>{n === 0 || n === 16 ? <IndentMark /> : Math.abs(n)}</HCm>)}
        </TopRuler>
        <Page>
          <DocTitle>CONVOCATION</DocTitle>
          <Columns>
            <p>M. Cédric DUPONT est prié(e) de se présenter à l’adresse suivante</p>
            <p>12 rue de Paris<br />78300 Poissy</p>
          </Columns>
          <When><span>à</span> la date suivante:</When>
          <DateBox><mark>12/11/2020</mark></DateBox>
          <Pointer width="6" height="14" viewBox="0 0 6 14" fill="none" stroke="#888">
            <path d="M1 1h4M3 1v7M1 8h4M1 10h4M1 12h4M2 13h2" strokeWidth="0.8" />
          </Pointer>
        </Page>
      </Canvas>
      <VScroll $w={8}>
        <Arrow aria-label="Monter"><Tri d="up" /></Arrow>
        <Piece $f={69} /><Piece $f={405} $thumb /><Piece $f={117} />
        <Arrow aria-label="Descendre"><Tri /></Arrow>
      </VScroll>
    </Work>
    <StatusBar $h={12}>
      <Stat $w={3} /><Stat $w={37}>Page 1 sur 1</Stat><Stat $w={25}>23 mots</Stat>
      <Slot $w={13} aria-label="Vérification"><ViewIcon k="proof" /></Slot>
      <Bar $grow $end><ViewIcon k="focus" /><Stat $w={20}>&nbsp;Focus</Stat></Bar>
      <Slot $w={20} aria-label="Lecture"><ViewIcon k="read" /></Slot>
      <Slot $w={19} $active aria-label="Page"><ViewIcon k="page" /></Slot>
      <Slot $w={21} aria-label="Web"><ViewIcon k="web" /></Slot>
      <Slot $w={9} aria-label="Zoom arrière"><Minus size={5} /></Slot>
      <Zoom type="range" aria-label="Zoom" min={0} max={100} defaultValue={56} />
      <Slot $w={9} aria-label="Zoom avant"><Plus size={5} /></Slot>
      <Percent>150 %</Percent>
    </StatusBar>
  </AppWindow>
);

export default function App() {
  return (
    <Screen>
      <Global />
      <Desktop>
        <Excel />
        <Word />
      </Desktop>
      <Taskbar>
        <Start aria-label="Démarrer">
          <svg width="9" height="9" viewBox="0 0 18 18" fill="#fff"><path d="M1 3l7-1v6.500H1zM9 1.900L17 1v7.500H9zM1 9.500h7V16l-7-1zM9 9.500h8V17l-8-1z" /></svg>
        </Start>
        <TaskSearch><Lens size={9} /><input aria-label="Recherche" placeholder="Taper ici pour rechercher" /></TaskSearch>
        <Tasks>
          <Task aria-label="Cortana">
            <svg width="9" height="9" viewBox="0 0 18 18" fill="none" stroke="#fff" strokeWidth="2.400"><circle cx="9" cy="9" r="7" /></svg>
          </Task>
          <Task aria-label="Affichage des tâches">
            <svg width="9" height="9" viewBox="0 0 18 18" fill="none" stroke="#eee" strokeWidth="1.500"><path d="M2 6h9v6H2zM2 1v2h9V1M2 17v-2h9v2M15 1v16M14 7h3" /></svg>
          </Task>
          <Task aria-label="Edge"><EdgeIcon /></Task>
          <Task aria-label="Explorateur">
            <svg width="12" height="11" viewBox="0 0 24 22"><path d="M1 2h8l2 3h12v15H1z" fill="#e9b440" /><path d="M1 7h22v13H1z" fill="#fbd874" /><path d="M6 20v-6h12v6h-3v-3H9v3z" fill="#3f97dc" /></svg>
          </Task>
          <Task $active $open aria-label="Word"><OfficeIcon letter="W" dark="#18468f" c={["#41a5ee", "#2b7cd3", "#185abd"]} /></Task>
          <Task $open aria-label="Excel"><OfficeIcon letter="X" dark="#107c41" c={["#33c481", "#21a366", "#185c37"]} /></Task>
          <Task aria-label="PowerPoint"><OfficeIcon round letter="P" dark="#b7321c" c={["#d35230", "#ff8f6b"]} /></Task>
          <Task aria-label="Outlook"><OfficeIcon letter="O" dark="#0f5ba8" c={["#28a8ea", "#1490df", "#50d0f5"]} /></Task>
        </Tasks>
        <Tray>
          <Slot $w={12} aria-label="Icônes cachées"><ChevronUp size={8} /></Slot>
          <Slot $w={12} aria-label="OneDrive"><svg width="9" height="6" viewBox="0 0 18 12" fill="#1f8fe5"><path d="M4 11a3.500 3.500 0 0 1 0-7 5 5 0 0 1 9-1 4 4 0 0 1 1 8z" /></svg></Slot>
          <Slot $w={12} aria-label="Réseau"><svg width="9" height="9" viewBox="0 0 18 18" fill="none" stroke="#fff" strokeWidth="1.400"><path d="M5 3h12v9H5zM8 16h7M11 12v4M1 1h4v5H1zM3 6v10h3" /></svg></Slot>
          <Slot $w={12} aria-label="Volume"><svg width="10" height="9" viewBox="0 0 20 18" fill="none" stroke="#fff" strokeWidth="1.400"><path d="M1 6h3l4-4v14l-4-4H1zM11 6q2 3 0 6M14 4q3 5 0 10M17 2q4 7 0 14" /></svg></Slot>
          <Clock>16:08<br />28/10/2020</Clock>
          <Slot $w={23} aria-label="Notifications">
            <svg width="12" height="12" viewBox="0 0 24 24"><path d="M1 2h18v13H9l-4 4v-4H1z" fill="#fff" /><path d="M4 6h12M4 10h12" stroke="#555" strokeWidth="1.400" /><circle cx="17" cy="16" r="6.500" fill="#30384c" stroke="#aaa" /><text x="17" y="19.500" fontSize="10" textAnchor="middle" fill="#fff" fontFamily="Open Sans, sans-serif">3</text></svg>
          </Slot>
          <ShowDesktop aria-label="Afficher le bureau" />
        </Tray>
      </Taskbar>
    </Screen>
  );
}
